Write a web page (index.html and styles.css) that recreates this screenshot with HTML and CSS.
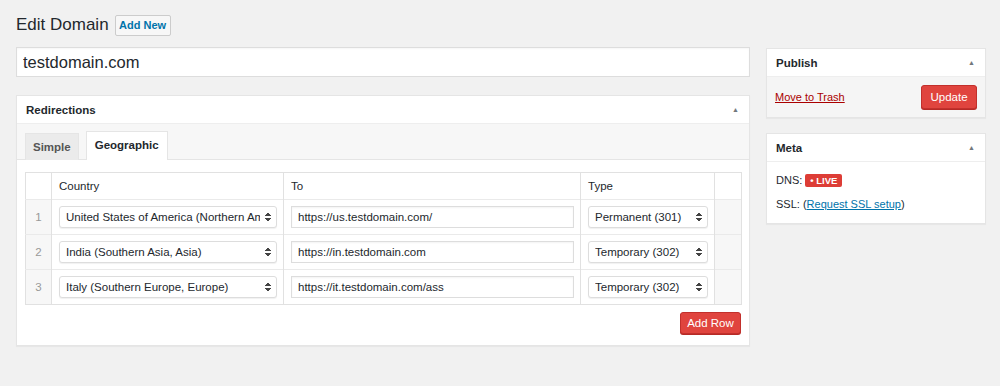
FILE: index.html
```html
<!DOCTYPE html>
<html lang="en">
<head>
    <meta charset="UTF-8">
    <title>Edit Domain</title>
    <link rel="stylesheet" href="styles.css">
</head>
<body>
    <div class="wrap">
        <div class="page-head">
            <h1>Edit Domain</h1>
            <a class="add-new" href="#">Add New</a>
        </div>

        <div class="columns">
            <div class="main-col">
                <input class="title-input" type="text" value="testdomain.com">

                <div class="postbox redirections">
                    <div class="box-head">
                        <h2>Redirections</h2>
                        <span class="toggle">&#9650;</span>
                    </div>
                    <div class="tabs">
                        <span class="tab">Simple</span>
                        <span class="tab active">Geographic</span>
                    </div>
                    <div class="table-wrap">
                        <table class="rules">
                            <colgroup>
                                <col class="w-idx">
                                <col class="w-country">
                                <col class="w-to">
                                <col class="w-type">
                                <col class="w-end">
                            </colgroup>
                            <thead>
                                <tr>
                                    <th class="idx"></th>
                                    <th>Country</th>
                                    <th>To</th>
                                    <th>Type</th>
                                    <th class="end"></th>
                                </tr>
                            </thead>
                            <tbody>
                                <tr>
                                    <td class="idx">1</td>
                                    <td><div class="select"><span>United States of America (Northern America)</span></div></td>
                                    <td><div class="text-field">https://us.testdomain.com/</div></td>
                                    <td><div class="select"><span>Permanent (301)</span></div></td>
                                    <td class="end"></td>
                                </tr>
                                <tr>
                                    <td class="idx">2</td>
                                    <td><div class="select"><span>India (Southern Asia, Asia)</span></div></td>
                                    <td><div class="text-field">https://in.testdomain.com</div></td>
                                    <td><div class="select"><span>Temporary (302)</span></div></td>
                                    <td class="end"></td>
                                </tr>
                                <tr>
                                    <td class="idx">3</td>
                                    <td><div class="select"><span>Italy (Southern Europe, Europe)</span></div></td>
                                    <td><div class="text-field">https://it.testdomain.com/ass</div></td>
                                    <td><div class="select"><span>Temporary (302)</span></div></td>
                                    <td class="end"></td>
                                </tr>
                            </tbody>
                        </table>
                        <div class="table-actions">
                            <button class="btn-red">Add Row</button>
                        </div>
                    </div>
                </div>
            </div>

            <div class="side-col">
                <div class="postbox">
                    <div class="box-head">
                        <h2>Publish</h2>
                        <span class="toggle">&#9650;</span>
                    </div>
                    <div class="publish-actions">
                        <a class="trash" href="#">Move to Trash</a>
                        <button class="btn-red">Update</button>
                    </div>
                </div>

                <div class="postbox">
                    <div class="box-head">
                        <h2>Meta</h2>
                        <span class="toggle">&#9650;</span>
                    </div>
                    <div class="meta-body">
                        <p>DNS: <span class="live">&bull; LIVE</span></p>
                        <p>SSL: (<a href="#">Request SSL setup</a>)</p>
                    </div>
                </div>
            </div>
        </div>
    </div>
</body>
</html>
```

FILE: styles.css
```css
body {
    margin: 0;
    background-color: #f1f1f1;
    color: #23282d;
    font-family: "Liberation Sans", Arial, sans-serif;
    font-size: 11.5px;
}

.wrap {
    padding: 12px 14px 0 16px;
}

.page-head {
    display: flex;
    align-items: center;
    gap: 6px;
    height: 26px;
}

h1 {
    margin: 0;
    font-size: 17px;
    font-weight: 400;
    color: #23282d;
}

.add-new {
    display: inline-block;
    width: 56px;
    box-sizing: border-box;
    text-align: center;
    padding: 3px 0;
    border: 1px solid #ccc;
    border-radius: 2px;
    background-color: #f7f7f7;
    color: #0073aa;
    font-size: 11px;
    font-weight: 700;
    text-decoration: none;
    line-height: 13px;
}

.columns {
    display: flex;
    gap: 16px;
    margin-top: 9px;
}

.main-col {
    width: 734px;
}

.side-col {
    width: 220px;
    padding-top: 1px;
}

.title-input {
    display: block;
    width: 100%;
    box-sizing: border-box;
    height: 30px;
    padding: 0 6px;
    border: 1px solid #ddd;
    background-color: #fff;
    font-family: inherit;
    font-size: 16.5px;
    color: #23282d;
    box-shadow: inset 0 1px 2px rgba(0, 0, 0, 0.04);
}

.postbox {
    background-color: #fff;
    border: 1px solid #e5e5e5;
    box-shadow: 0 1px 1px rgba(0, 0, 0, 0.04);
    margin-bottom: 15px;
}

.redirections {
    margin-top: 18px;
}

.box-head {
    display: flex;
    justify-content: space-between;
    align-items: center;
    height: 27px;
    padding: 0 10px 0 9px;
    border-bottom: 1px solid #eee;
}

.box-head h2 {
    margin: 0;
    font-size: 11.5px;
    font-weight: 700;
}

.toggle {
    font-size: 7px;
    color: #72777c;
}

.tabs {
    display: flex;
    gap: 7px;
    height: 27px;
    padding: 8px 0 0 8px;
    background-color: #f7f7f7;
    border-bottom: 1px solid #e5e5e5;
    align-items: flex-end;
}

.tab {
    height: 26px;
    line-height: 26px;
    padding: 0 7px;
    border: 1px solid #e5e5e5;
    border-bottom: none;
    background-color: #ebebeb;
    color: #555;
    font-weight: 700;
    margin-bottom: -1px;
}

.tab.active {
    height: 28px;
    line-height: 27px;
    padding: 0 8px;
    background-color: #fff;
    color: #23282d;
}

.table-wrap {
    padding: 12px 8px 11px 8px;
}

.rules {
    width: 717px;
    table-layout: fixed;
    border-collapse: collapse;
    border: 1px solid #e1e1e1;
}

.w-idx { width: 26px; }
.w-country { width: 232px; }
.w-to { width: 297px; }
.w-type { width: 134px; }
.w-end { width: 27px; }

.rules th {
    height: 26px;
    text-align: left;
    font-weight: 400;
    padding: 0 7px;
    border-right: 1px solid #e1e1e1;
}

.rules td {
    height: 34px;
    padding: 0 6px 0 7px;
    border-top: 1px solid #eaeaea;
    border-right: 1px solid #e1e1e1;
}

.rules .idx {
    text-align: center;
    color: #999;
    background-color: #f7f7f7;
    padding: 0;
}

.rules th.idx,
.rules th.end {
    background-color: #fff;
}

.rules .end {
    background-color: #f7f7f7;
    padding: 0;
}

.select {
    position: relative;
    height: 20px;
    border: 1px solid #ddd;
    border-radius: 3px;
    background-color: #fff;
    padding: 0 16px 0 6px;
    line-height: 20px;
    white-space: nowrap;
    overflow: hidden;
    box-shadow: 0 1px 1px rgba(0, 0, 0, 0.06);
}

.select span {
    display: block;
    overflow: hidden;
}

.select::after {
    content: "";
    position: absolute;
    right: 5px;
    top: 5px;
    width: 6px;
    height: 10px;
    background:
        linear-gradient(to bottom right, transparent 50%, #444 50%) 0 0 / 3px 4px no-repeat,
        linear-gradient(to bottom left, transparent 50%, #444 50%) 3px 0 / 3px 4px no-repeat,
        linear-gradient(to top right, transparent 50%, #444 50%) 0 6px / 3px 4px no-repeat,
        linear-gradient(to top left, transparent 50%, #444 50%) 3px 6px / 3px 4px no-repeat;
}

.text-field {
    height: 20px;
    line-height: 20px;
    padding: 0 6px;
    border: 1px solid #ddd;
    background-color: #fff;
    box-shadow: inset 0 1px 2px rgba(0, 0, 0, 0.05);
}

.table-actions {
    display: flex;
    justify-content: flex-end;
    padding-top: 7px;
}

.btn-red {
    height: 22px;
    width: 61px;
    padding: 0;
    border: 1px solid #c2302c;
    border-radius: 3px;
    background-color: #e0443e;
    color: #fff;
    font-family: inherit;
    font-size: 11.5px;
    box-shadow: 0 1px 0 #b62a26;
}

.publish-actions {
    display: flex;
    justify-content: space-between;
    align-items: center;
    padding: 8px;
    background-color: #f5f5f5;
    height: 24px;
}

.publish-actions .btn-red {
    height: 24px;
    width: 56px;
}

.trash {
    color: #a00;
    font-size: 11px;
}

.meta-body {
    padding: 3px 9px 2px 9px;
}

.meta-body p {
    margin: 8px 0 10px 0;
    font-size: 11px;
    line-height: 14px;
}

.meta-body a {
    color: #0073aa;
}

.live {
    display: inline-block;
    padding: 0 5px;
    border-radius: 2px;
    background-color: #dd3d36;
    color: #fff;
    font-size: 9.5px;
    font-weight: 700;
    line-height: 13px;
    vertical-align: 0;
}
```
